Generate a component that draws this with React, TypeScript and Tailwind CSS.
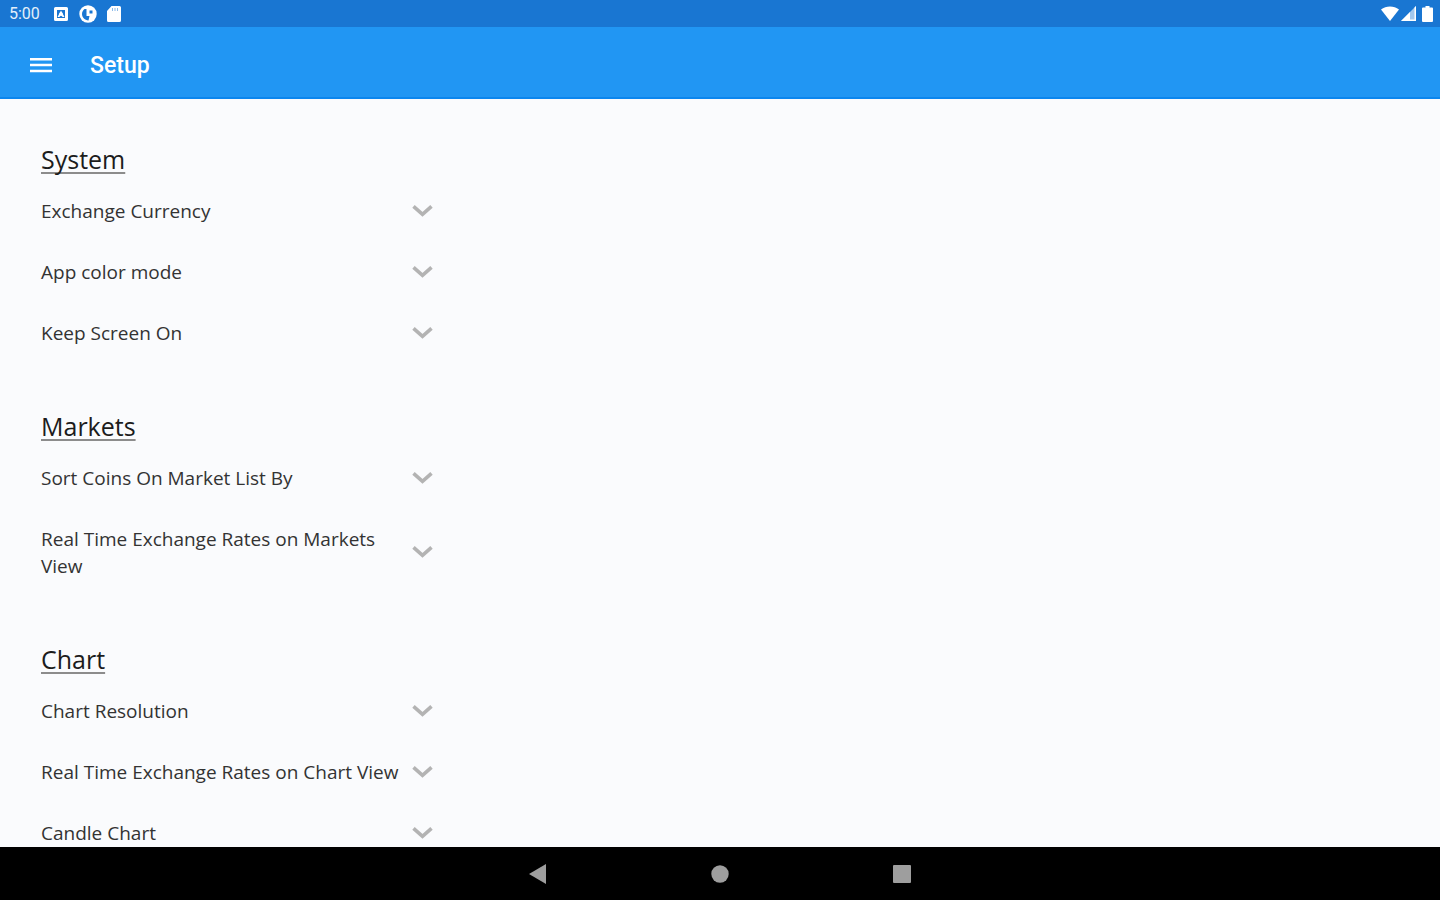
import { useState } from "react";

type Section = { title: string; items: string[] };

const sections: Section[] = [
  { title: "System", items: ["Exchange Currency", "App color mode", "Keep Screen On"] },
  {
    title: "Markets",
    items: ["Sort Coins On Market List By", "Real Time Exchange Rates on Markets View"],
  },
  {
    title: "Chart",
    items: ["Chart Resolution", "Real Time Exchange Rates on Chart View", "Candle Chart"],
  },
];

function StatusBar() {
  return (
    <div className="flex h-[27px] shrink-0 items-center justify-between bg-[#1976d2] pr-[7px] pl-[9px] text-white">
      <div className="flex items-center">
        <span className="w-[45px] text-base leading-5 text-[#e3effa]">5:00</span>
        <svg className="mr-[11px] h-[14px] w-[14px]" viewBox="0 0 14 14" aria-hidden="true">
          <path
            fill="currentColor"
            fillRule="evenodd"
            d="M1.5 0h11A1.5 1.5 0 0 1 14 1.500v11a1.500 1.500 0 0 1-1.500 1.500h-11A1.500 1.500 0 0 1 0 12.500v-11A1.500 1.500 0 0 1 1.500 0zM3 3v8h8V3z"
          />
          <path fill="currentColor" d="M7 3.500 10.500 10H8.700L7 8.600 5.300 10H3.500z" />
          <circle cx="7" cy="7" r="1.800" fill="currentColor" />
        </svg>
        <svg className="mr-[10px] h-[18px] w-[18px]" viewBox="0 0 18 18" aria-hidden="true">
          <circle cx="9" cy="9" r="8.700" fill="currentColor" />
          <path fill="#1976d2" d="M5.500 4h2v7h3L9.500 15.500C6 15 3 12.500 3 9c0-2 1-4 2.500-5z" />
          <path fill="#1976d2" d="M10.500 5.500h3v3h-3z" />
        </svg>
        <svg className="h-4 w-[14px]" viewBox="0 0 14 16" aria-hidden="true">
          <path
            fill="currentColor"
            d="M4.500 0h8A1.500 1.500 0 0 1 14 1.500v13a1.500 1.500 0 0 1-1.500 1.500h-11A1.500 1.500 0 0 1 0 14.500V5z"
          />
          <path stroke="#1976d2" strokeOpacity=".5" d="M5.500 2v3M8 2v3M10.500 2v3" />
        </svg>
      </div>
      <div className="flex items-center">
        <svg className="mr-[2px] h-[15px] w-[18px]" viewBox="0 0 18 15" aria-hidden="true">
          <path fill="currentColor" d="M0 3.500C5-.5 13-.5 18 3.500L9 15z" />
        </svg>
        <svg className="mr-[6px] h-[15px] w-[15px]" viewBox="0 0 15 15" aria-hidden="true">
          <path fill="currentColor" fillOpacity=".6" d="M15 0v15H0z" />
          <path fill="currentColor" d="M9 6v9H0zM13.500 1.500v12H15V0zM9 13.500h6V15H9z" />
        </svg>
        <svg className="h-4 w-[11px]" viewBox="0 0 11 16" aria-hidden="true">
          <path
            fill="currentColor"
            d="M3.500 0h4v1.500H10a1 1 0 0 1 1 1V15a1 1 0 0 1-1 1H1a1 1 0 0 1-1-1V2.500a1 1 0 0 1 1-1h2.500z"
          />
        </svg>
      </div>
    </div>
  );
}

function SettingRow({ label }: { label: string }) {
  const [open, setOpen] = useState(false);
  return (
    <button
      type="button"
      aria-expanded={open}
      onClick={() => setOpen(!open)}
      className="flex w-full items-center justify-between pt-[18px] pb-4 text-left"
    >
      <span className="text-[19px] leading-[27px] text-[#333]">{label}</span>
      <svg
        className="h-[14px] w-[22px] shrink-0"
        viewBox="0 0 22 14"
        fill="none"
        stroke="#b3b3b3"
        strokeWidth="3.600"
        aria-hidden="true"
      >
        <path d="M2.500 1.400 11.500 9.400 20.500 1.400" />
      </svg>
    </button>
  );
}

export default function App() {
  return (
    <div className="flex h-screen flex-col bg-[#fafbfd] font-['Roboto',sans-serif]">
      <StatusBar />
      <header className="flex h-[72px] shrink-0 items-center border-b-2 border-[#0c86ee] bg-[#2196f3] pt-2 pl-[30px] text-white">
        <button type="button" aria-label="Open menu" className="mr-[38px]">
          <svg className="h-4 w-[22px]" viewBox="0 0 22 16" aria-hidden="true">
            <path stroke="currentColor" strokeWidth="2.500" d="M0 1.250h22M0 7h22M0 13h22" />
          </svg>
        </button>
        <h1 className="text-[23px] leading-8 font-medium">Setup</h1>
      </header>
      <main className="min-h-0 flex-1 overflow-y-auto pt-[42px] pl-[41px] font-['Open_Sans',sans-serif] [scrollbar-width:none]">
        <div className="flex w-full max-w-[392px] flex-col gap-[45px]">
          {sections.map((section) => (
            <section key={section.title}>
              <h2 className="mb-[3px] text-[25px] leading-9 text-[#1c1c1c] underline decoration-[#8c8c8c] decoration-2 underline-offset-3 [text-decoration-skip-ink:none]">
                {section.title}
              </h2>
              {section.items.map((label) => (
                <SettingRow key={label} label={label} />
              ))}
            </section>
          ))}
        </div>
      </main>
      <nav className="flex h-[53px] shrink-0 items-center justify-center gap-[164px] bg-black text-[#9e9e9e]">
        <button type="button" aria-label="Back">
          <svg className="h-5 w-[18px]" viewBox="0 0 18 20" aria-hidden="true">
            <path fill="currentColor" d="M17 0v20L0 10z" />
          </svg>
        </button>
        <button type="button" aria-label="Home">
          <svg className="h-[18px] w-[18px]" viewBox="0 0 18 18" aria-hidden="true">
            <circle cx="9" cy="9" r="8.700" fill="currentColor" />
          </svg>
        </button>
        <button type="button" aria-label="Recent apps">
          <svg className="h-[18px] w-[18px]" viewBox="0 0 18 18" aria-hidden="true">
            <rect width="18" height="18" rx="1" fill="currentColor" />
          </svg>
        </button>
      </nav>
    </div>
  );
}
